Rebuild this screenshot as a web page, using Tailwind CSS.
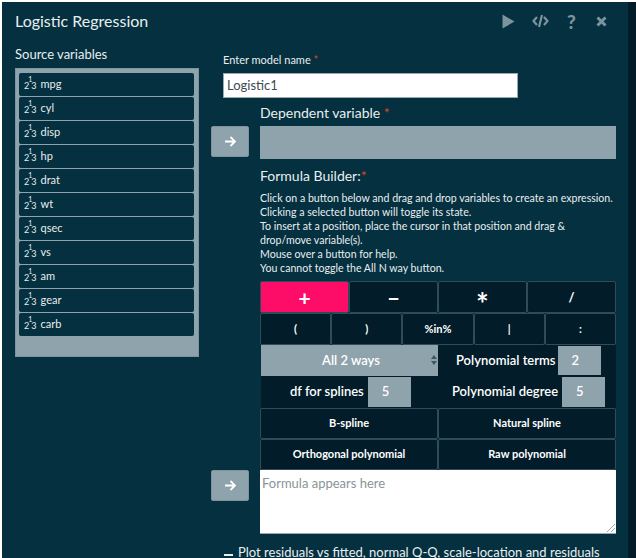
<!DOCTYPE html>
<html lang="en">
<head>
  <meta charset="UTF-8" />
  <title>Logistic Regression</title>
  <script src="https://cdn.jsdelivr.net/npm/@tailwindcss/browser@4"></script>
</head>
<body class="bg-white overflow-hidden">
  <div class="w-[636px] h-[558px] overflow-hidden pt-[2px] pl-[2px] flex font-['Lato','Liberation_Sans',sans-serif] text-[#e8eef0]">
    <main class="w-[626px] h-[556px] bg-[#04303f] overflow-hidden">
      <!-- title bar -->
      <header class="flex items-center h-[38px] pl-[13px] pr-[21px]">
        <h1 class="text-[16px] leading-[38px] flex-1 mt-[-1px]">Logistic Regression</h1>
        <div class="flex items-center gap-[16px] text-[#7d949f]">
          <svg class="w-[13px] h-[15px] mr-[1px]" viewBox="0 0 13 15"><path d="M0.5 0.5 L12.5 7.5 L0.5 14.5 Z" fill="currentColor"/></svg>
          <svg class="w-[17px] h-[14px]" viewBox="0 0 17 14" fill="none" stroke="currentColor" stroke-width="2.2"><path d="M5 3 L1.5 7 L5 11 M12 3 L15.5 7 L12 11 M10 1 L7 13"/></svg>
          <span class="w-[13px] text-center text-[19px] leading-none font-black">?</span>
          <svg class="w-[11px] h-[11px] ml-[2px]" viewBox="0 0 11 11" fill="none" stroke="currentColor" stroke-width="3"><path d="M1.5 1.5 L9.5 9.5 M9.5 1.5 L1.5 9.5"/></svg>
        </div>
      </header>

      <div class="flex pl-[13px]">
        <!-- source list -->
        <section class="w-[184px] shrink-0">
          <h2 class="text-[13px] leading-[16px] mt-[6px] mb-[6px]">Source variables</h2>
          <ul class="h-[289px] bg-[#8fa3ac] border border-[#7d949f] pt-[4px] pl-[3px] pr-[4px] flex flex-col gap-[1px] text-[11px] text-[#e8eef0]">
            <li class="h-[23px] bg-[#04303f] rounded-[2px] flex items-center gap-[4px] pl-[5px]"><span class="text-[9px] leading-none mt-[2px]">2<sup class="text-[7px] align-[4px] mx-[-1px]">1</sup>3</span>mpg</li>
            <li class="h-[23px] bg-[#04303f] rounded-[2px] flex items-center gap-[4px] pl-[5px]"><span class="text-[9px] leading-none mt-[2px]">2<sup class="text-[7px] align-[4px] mx-[-1px]">1</sup>3</span>cyl</li>
            <li class="h-[23px] bg-[#04303f] rounded-[2px] flex items-center gap-[4px] pl-[5px]"><span class="text-[9px] leading-none mt-[2px]">2<sup class="text-[7px] align-[4px] mx-[-1px]">1</sup>3</span>disp</li>
            <li class="h-[23px] bg-[#04303f] rounded-[2px] flex items-center gap-[4px] pl-[5px]"><span class="text-[9px] leading-none mt-[2px]">2<sup class="text-[7px] align-[4px] mx-[-1px]">1</sup>3</span>hp</li>
            <li class="h-[23px] bg-[#04303f] rounded-[2px] flex items-center gap-[4px] pl-[5px]"><span class="text-[9px] leading-none mt-[2px]">2<sup class="text-[7px] align-[4px] mx-[-1px]">1</sup>3</span>drat</li>
            <li class="h-[23px] bg-[#04303f] rounded-[2px] flex items-center gap-[4px] pl-[5px]"><span class="text-[9px] leading-none mt-[2px]">2<sup class="text-[7px] align-[4px] mx-[-1px]">1</sup>3</span>wt</li>
            <li class="h-[23px] bg-[#04303f] rounded-[2px] flex items-center gap-[4px] pl-[5px]"><span class="text-[9px] leading-none mt-[2px]">2<sup class="text-[7px] align-[4px] mx-[-1px]">1</sup>3</span>qsec</li>
            <li class="h-[23px] bg-[#04303f] rounded-[2px] flex items-center gap-[4px] pl-[5px]"><span class="text-[9px] leading-none mt-[2px]">2<sup class="text-[7px] align-[4px] mx-[-1px]">1</sup>3</span>vs</li>
            <li class="h-[23px] bg-[#04303f] rounded-[2px] flex items-center gap-[4px] pl-[5px]"><span class="text-[9px] leading-none mt-[2px]">2<sup class="text-[7px] align-[4px] mx-[-1px]">1</sup>3</span>am</li>
            <li class="h-[23px] bg-[#04303f] rounded-[2px] flex items-center gap-[4px] pl-[5px]"><span class="text-[9px] leading-none mt-[2px]">2<sup class="text-[7px] align-[4px] mx-[-1px]">1</sup>3</span>gear</li>
            <li class="h-[23px] bg-[#04303f] rounded-[2px] flex items-center gap-[4px] pl-[5px]"><span class="text-[9px] leading-none mt-[2px]">2<sup class="text-[7px] align-[4px] mx-[-1px]">1</sup>3</span>carb</li>
          </ul>
        </section>

        <!-- model form -->
        <section class="ml-[12px] w-[405px] shrink-0">
          <div class="pl-[12px] mt-[12px]">
            <label class="block text-[11px] leading-[16px] mb-[5px]">Enter model name <span class="text-[#d9472b]">*</span></label>
            <div class="w-[295px] h-[25px] bg-white border border-[#9aa9b0] text-[#3d4a50] text-[13px] leading-[23px] pl-[3px]">Logistic1</div>
          </div>

          <div class="flex gap-[11px] mt-[5px]">
            <div class="w-[38px] shrink-0 pt-[23px]">
              <button class="w-[38px] h-[31px] bg-[#8fa3ac] border border-[#7d949f] rounded-[2px] flex items-center justify-center">
                <svg class="w-[12px] h-[11px]" viewBox="0 0 12 11" fill="none" stroke="#fff" stroke-width="1.8"><path d="M1 5.5 H10.5 M6.5 1 L11 5.5 L6.5 10"/></svg>
              </button>
            </div>
            <div class="w-[356px]">
              <label class="block text-[14px] leading-[18px] mb-[4px] mt-[1px]">Dependent variable <span class="text-[#d9472b]">*</span></label>
              <div class="h-[33px] bg-[#8fa3ac]"></div>
            </div>
          </div>

          <div class="flex gap-[11px]">
            <div class="w-[38px] shrink-0 pt-[311px]">
              <button class="w-[38px] h-[31px] bg-[#8fa3ac] border border-[#7d949f] rounded-[2px] flex items-center justify-center">
                <svg class="w-[12px] h-[11px]" viewBox="0 0 12 11" fill="none" stroke="#fff" stroke-width="1.8"><path d="M1 5.5 H10.5 M6.5 1 L11 5.5 L6.5 10"/></svg>
              </button>
            </div>
            <div class="w-[356px]">
              <p class="text-[14px] leading-[18px] mt-[8px] mb-[6px]">Formula Builder:<span class="text-[#d9472b]">*</span></p>
              <div class="text-[10.6px] leading-[14px] mb-[6px]">
                <p>Click on a button below and drag and drop variables to create an expression.</p>
                <p>Clicking a selected button will toggle its state.</p>
                <p>To insert at a position, place the cursor in that position and drag &amp;<br>drop/move variable(s).</p>
                <p>Mouse over a button for help.</p>
                <p>You cannot toggle the All N way button.</p>
              </div>

              <div class="flex flex-col font-bold text-white text-[11px]">
                <div class="grid grid-cols-4 grid-rows-[32px] h-[32px] text-[21px] leading-none">
                  <button class="bg-[#fd0d68] border border-[#2f4d59] rounded-[2px]">+</button>
                  <button class="bg-[#021c29] border border-[#2f4d59] rounded-[2px]">−</button>
                  <button class="bg-[#021c29] border border-[#2f4d59] rounded-[2px] text-[30px]"><span class="block leading-[16px] mt-[12px]">*</span></button>
                  <button class="bg-[#021c29] border border-[#2f4d59] rounded-[2px] text-[13px]">/</button>
                </div>
                <div class="grid grid-cols-5 h-[32px]">
                  <button class="bg-[#021c29] border border-[#2f4d59] rounded-[2px]">(</button>
                  <button class="bg-[#021c29] border border-[#2f4d59] rounded-[2px]">)</button>
                  <button class="bg-[#021c29] border border-[#2f4d59] rounded-[2px]">%in%</button>
                  <button class="bg-[#021c29] border border-[#2f4d59] rounded-[2px]">|</button>
                  <button class="bg-[#021c29] border border-[#2f4d59] rounded-[2px]">:</button>
                </div>
                <div class="grid grid-cols-2 h-[31px] text-[13px] font-semibold">
                  <div class="relative bg-[#8fa3ac] flex items-center justify-center pl-[3px] ml-[1px]">All 2 ways
                    <svg class="absolute right-[1px] top-[10px] w-[6px] h-[10px]" viewBox="0 0 6 10" fill="#3f5560"><path d="M3 0 L6 4 H0 Z M3 10 L0 6 H6 Z"/></svg>
                  </div>
                  <div class="bg-[#021c29] flex items-center pl-[18px] gap-[2px]">Polynomial terms<span class="w-[43px] h-[29px] bg-[#8fa3ac] flex items-center pl-[14px]">2</span></div>
                </div>
                <div class="grid grid-cols-2 h-[32px] text-[13px] font-semibold">
                  <div class="bg-[#021c29] flex items-center pl-[29px] gap-[4px] ml-[1px]">df for splines<span class="w-[43px] h-[30px] bg-[#8fa3ac] flex items-center pl-[14px]">5</span></div>
                  <div class="bg-[#021c29] flex items-center pl-[14px] gap-[4px]">Polynomial degree<span class="w-[43px] h-[30px] bg-[#8fa3ac] flex items-center pl-[14px]">5</span></div>
                </div>
                <div class="grid grid-cols-2 h-[31px]">
                  <button class="bg-[#021c29] border border-[#2f4d59] rounded-[2px]">B-spline</button>
                  <button class="bg-[#021c29] border border-[#2f4d59] rounded-[2px]">Natural spline</button>
                </div>
                <div class="grid grid-cols-2 h-[31px]">
                  <button class="bg-[#021c29] border border-[#2f4d59] rounded-[2px]">Orthogonal polynomial</button>
                  <button class="bg-[#021c29] border border-[#2f4d59] rounded-[2px]">Raw polynomial</button>
                </div>
              </div>

              <div class="relative h-[64px] bg-white border-b border-[#9aa9b0] text-[#8a9499] text-[13px] leading-[16px] px-[2px] pt-[5px]">Formula appears here
                <svg class="absolute right-[1px] bottom-[1px] w-[8px] h-[8px]" viewBox="0 0 8 8" stroke="#8a9499" stroke-width="0.8"><path d="M0 8 L8 0 M4 8 L8 4"/></svg>
              </div>

              <div class="flex text-[13px] leading-[16px] mt-[10px] whitespace-nowrap ml-[-36px] w-[400px]">
                <span class="w-[9px] h-[10px] border-t-2 border-[#e8eef0] mt-[10px] mr-[5px] shrink-0"></span>
                <span>Plot residuals vs fitted, normal Q-Q, scale-location and residuals</span>
              </div>
            </div>
          </div>
        </section>
      </div>
    </main>
    <div class="w-[8px] h-[556px] bg-[#021c29]"></div>
  </div>
</body>
</html>
